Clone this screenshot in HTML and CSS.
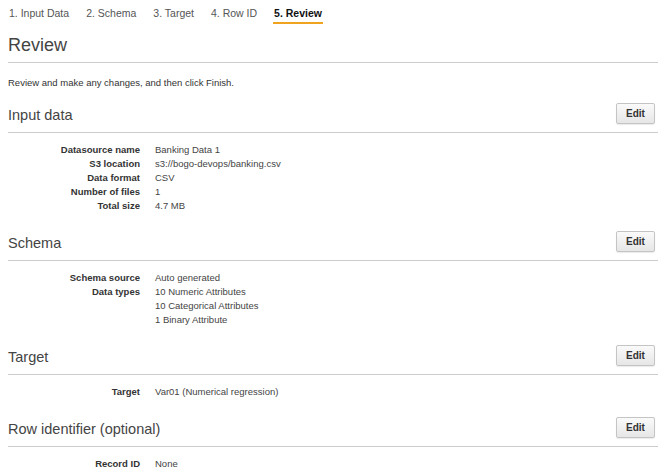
FILE: index.html
```html
<!DOCTYPE html>
<html>
<head>
<meta charset="utf-8">
<link rel="stylesheet" href="styles.css">
</head>
<body>
<div class="page">
  <nav class="tabs">
    <span class="tab">1. Input Data</span>
    <span class="tab">2. Schema</span>
    <span class="tab">3. Target</span>
    <span class="tab">4. Row ID</span>
    <span class="tab active">5. Review</span>
  </nav>
  <h1 class="title">Review</h1>
  <p class="intro">Review and make any changes, and then click Finish.</p>

  <section class="section first">
    <div class="section-head">
      <h2>Input data</h2>
      <button class="btn">Edit</button>
    </div>
    <dl class="props">
      <dt>Datasource name</dt><dd>Banking Data 1</dd>
      <dt>S3 location</dt><dd>s3://bogo-devops/banking.csv</dd>
      <dt>Data format</dt><dd>CSV</dd>
      <dt>Number of files</dt><dd>1</dd>
      <dt>Total size</dt><dd>4.7 MB</dd>
    </dl>
  </section>

  <section class="section">
    <div class="section-head">
      <h2>Schema</h2>
      <button class="btn">Edit</button>
    </div>
    <dl class="props">
      <dt>Schema source</dt><dd>Auto generated</dd>
      <dt>Data types</dt><dd>10 Numeric Attributes<br>10 Categorical Attributes<br>1 Binary Attribute</dd>
    </dl>
  </section>

  <section class="section">
    <div class="section-head">
      <h2>Target</h2>
      <button class="btn">Edit</button>
    </div>
    <dl class="props">
      <dt>Target</dt><dd>Var01 (Numerical regression)</dd>
    </dl>
  </section>

  <section class="section">
    <div class="section-head">
      <h2>Row identifier (optional)</h2>
      <button class="btn">Edit</button>
    </div>
    <dl class="props">
      <dt>Record ID</dt><dd>None</dd>
    </dl>
  </section>
</div>
</body>
</html>
```
FILE: styles.css
```css
* { box-sizing: border-box; }
html, body { margin: 0; padding: 0; background: #fff; }
body {
  font-family: "Liberation Sans", Arial, sans-serif;
  color: #333;
  font-size: 9.5px;
}
.page {
  width: 650px;
  margin-left: 8px;
}
.tabs {
  display: flex;
  gap: 15px;
  padding-left: 0;
  height: 24px;
  padding-top: 6px;
}
.tab {
  font-size: 10.5px;
  color: #555;
  line-height: 14px;
  height: 18px;
  padding: 0 1px;
}
.tab.active {
  font-weight: bold;
  color: #111;
  border-bottom: 2px solid #f0a31e;
}
.title {
  margin: 0;
  font-weight: normal;
  font-size: 18px;
  color: #444;
  padding-top: 9px;
  line-height: 24px;
  padding-bottom: 5px;
  border-bottom: 1px solid #ccc;
}
.intro {
  margin: 0;
  padding-top: 13px;
  line-height: 14px;
  color: #333;
}
.section-head {
  display: flex;
  justify-content: space-between;
  align-items: flex-end;
  border-bottom: 1px solid #ccc;
  padding-top: 18px;
  padding-bottom: 8px;
}
.section.first .section-head { padding-top: 13px; }
.section-head h2 {
  margin: 0;
  font-weight: normal;
  font-size: 14.5px;
  color: #444;
  line-height: 18px;
}
.btn {
  font-family: "Liberation Sans", Arial, sans-serif;
  font-weight: bold;
  font-size: 10px;
  color: #333;
  width: 39px;
  height: 21px;
  padding: 0;
  margin-right: 3px;
  border: 1px solid #c4c4c4;
  border-radius: 2px;
  background: linear-gradient(#fafafa, #e6e6e6);
  box-shadow: 0 1px 1px rgba(0,0,0,0.08);
}
.props {
  display: grid;
  grid-template-columns: 132px 1fr;
  column-gap: 15px;
  margin: 0;
  padding-top: 10px;
  padding-bottom: 0;
  line-height: 14px;
}
.props dt {
  text-align: right;
  font-weight: bold;
  color: #333;
}
.props dd {
  margin: 0;
  color: #444;
}
```
